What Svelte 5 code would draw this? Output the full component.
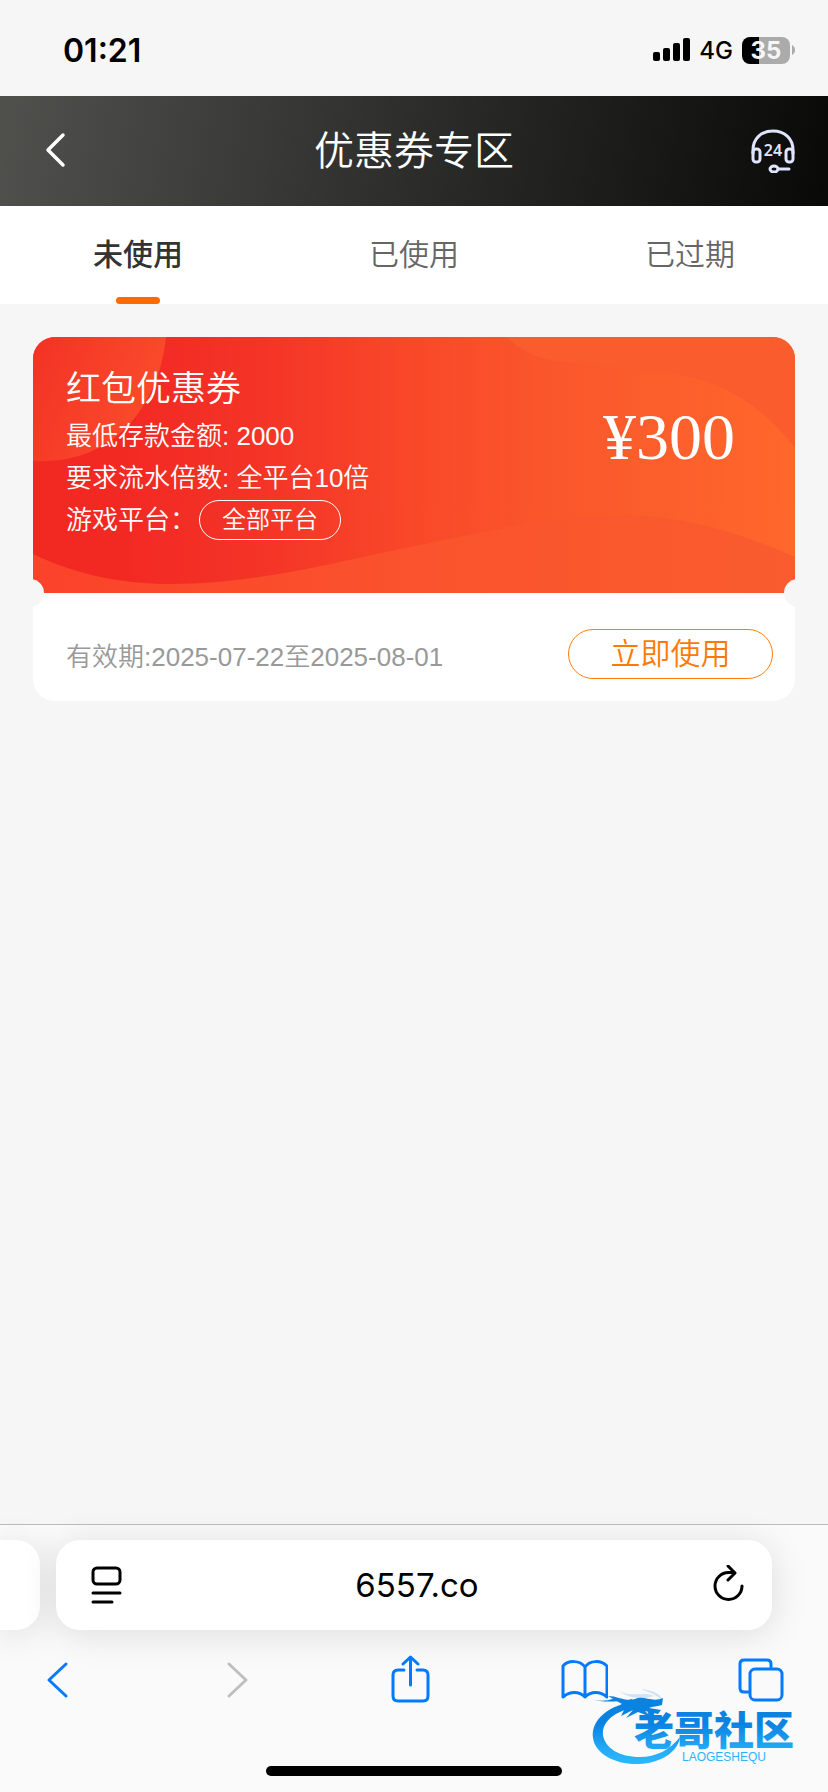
<script>
  const tabs = ["未使用", "已使用", "已过期"];
  let activeTab = $state(0);

  const coupons = [
    {
      title: "红包优惠券",
      minDeposit: "2000",
      turnover: "全平台10倍",
      platform: "全部平台",
      amount: 300,
      from: "2025-07-22",
      to: "2025-08-01",
      tab: 0
    }
  ];

  let visible = $derived(coupons.filter(c => c.tab === activeTab));
</script>

<div class="screen">
  <div class="status-bar">
    <span class="time">01:21</span>
    <div class="status-icons">
      <svg class="signal" viewBox="0 0 38 24" aria-hidden="true">
        <rect x="0" y="14" width="7" height="9" rx="2" />
        <rect x="10" y="10" width="7" height="13" rx="2" />
        <rect x="20" y="5" width="7" height="18" rx="2" />
        <rect x="30" y="0" width="7" height="23" rx="2" />
      </svg>
      <span class="network">4G</span>
      <div class="battery"><span>35</span></div>
      <svg class="battery-tip" viewBox="0 0 3 10" aria-hidden="true">
        <path d="M0 0C4 2 4 8 0 10Z" fill="#ababab" />
      </svg>
    </div>
  </div>

  <header class="nav">
    <button class="nav-button" aria-label="返回">
      <svg width="44" height="44" viewBox="0 0 44 44" fill="none">
        <path d="M30 6L15 21L30 36" stroke="#fff" stroke-width="3.500" stroke-linecap="round" stroke-linejoin="round" />
      </svg>
    </button>
    <h1>优惠券专区</h1>
    <button class="nav-button" aria-label="客服">
      <svg width="44" height="44" viewBox="0 0 44 44" fill="none" stroke="#dfe5ff" stroke-width="3">
        <path d="M2 25V21C2 10 10 2 22 2S42 10 42 21V25" />
        <rect x="2" y="20" width="7" height="13" rx="3" />
        <rect x="35" y="20" width="7" height="13" rx="3" />
        <ellipse cx="23" cy="40" rx="4" ry="3" />
        <path d="M28 40H38" stroke-linecap="round" />
        <text x="22" y="27" class="hours">24</text>
      </svg>
    </button>
  </header>

  <div class="tabs" role="tablist">
    {#each tabs as tab, i}
      <button
        class="tab"
        class:active={i === activeTab}
        role="tab"
        aria-selected={i === activeTab}
        onclick={() => (activeTab = i)}
      >{tab}</button>
    {/each}
  </div>

  <main>
    {#each visible as coupon}
      <article class="coupon">
        <div class="coupon-top">
          <svg class="art" viewBox="0 0 762 256" preserveAspectRatio="none" aria-hidden="true">
            <defs>
              <linearGradient id="base">
                <stop offset="0.1" stop-color="#f22823" />
                <stop offset="0.3" stop-color="#f43427" />
                <stop offset="0.5" stop-color="#f94829" />
                <stop offset="0.7" stop-color="#fa582c" />
                <stop offset="1" stop-color="#ff672b" />
              </linearGradient>
              <linearGradient id="corner" x1="0" y1="0" x2="1" y2="0.4">
                <stop offset="0" stop-color="#f33225" />
                <stop offset="1" stop-color="#fa4c2b" />
              </linearGradient>
              <linearGradient id="wave">
                <stop offset="0" stop-color="#fb422a" />
                <stop offset="0.5" stop-color="#fa532d" />
                <stop offset="1" stop-color="#fa5c2e" />
              </linearGradient>
            </defs>
            <rect width="762" height="256" fill="url(#base)" />
            <path d="M0 0H133C126 66 84 128 0 124Z" fill="url(#corner)" />
            <path d="M474 0C500 24 516 24 574 29C630 36 700 30 762 111V0Z" fill="#fa5c2e" />
            <path d="M0 217C50 241 96 247 140 247C220 247 300 226 387 208C450 195 520 178 587 178C640 178 700 192 762 220V256H0Z" fill="url(#wave)" />
          </svg>
          <div class="info">
            <h2>{coupon.title}</h2>
            <p>最低存款金额: {coupon.minDeposit}</p>
            <p>要求流水倍数: {coupon.turnover}</p>
            <p class="platform">游戏平台：<span class="chip">{coupon.platform}</span></p>
          </div>
          <div class="amount">¥{coupon.amount}</div>
        </div>
        <div class="coupon-bottom">
          <span class="validity">有效期:{coupon.from}至{coupon.to}</span>
          <button class="use">立即使用</button>
        </div>
      </article>
    {/each}
  </main>

  <footer class="browser">
    <div class="address-row">
      <div class="pill previous"></div>
      <div class="pill address">
        <button aria-label="页面菜单">
          <svg width="36" height="40" viewBox="0 0 36 40" fill="none" stroke="#000" stroke-width="3" stroke-linecap="round">
            <rect x="5" y="3" width="27" height="16" rx="4" />
            <path d="M5 28H32M5 37H24" />
          </svg>
        </button>
        <span class="url">6557.co</span>
        <button aria-label="重新加载">
          <svg width="36" height="40" viewBox="0 0 36 40" fill="none" stroke="#000" stroke-width="3" stroke-linecap="round" stroke-linejoin="round">
            <path d="M32 21A13.500 13.500 0 1 1 18.500 7.500H24" />
            <path d="M18 1L25 8L18 15" />
          </svg>
        </button>
      </div>
      <div class="pill next"></div>
    </div>

    <nav class="toolbar">
      <button aria-label="后退">
        <svg width="48" height="52" viewBox="0 0 48 52">
          <path d="M33 10L16 26L33 42" />
        </svg>
      </button>
      <button aria-label="前进" disabled>
        <svg width="48" height="52" viewBox="0 0 48 52">
          <path d="M20 10L37 26L20 42" />
        </svg>
      </button>
      <button aria-label="分享">
        <svg width="48" height="52" viewBox="0 0 48 52">
          <path d="M19 16H13Q8 16 8 21V42Q8 47 13 47H38Q43 47 43 42V21Q43 16 38 16H32" />
          <path d="M25.500 31V3M18 10L25.500 3L33 10" />
        </svg>
      </button>
      <button aria-label="书签">
        <svg width="48" height="52" viewBox="0 0 48 52">
          <path d="M25 13C20 6 8 6 3 12V43C10 37 19 37 25 43C31 37 40 37 47 43V12C41 6 30 6 25 13V43" />
        </svg>
      </button>
      <button aria-label="标签页">
        <svg width="48" height="52" viewBox="0 0 48 52">
          <rect x="14" y="15" width="32" height="31" rx="5" />
          <path d="M12 38H8Q4 38 4 34V10Q4 6 8 6H31Q35 6 35 10V13" />
        </svg>
      </button>
    </nav>

    <div class="home-indicator"></div>

    <svg class="watermark" width="228" height="80" viewBox="0 0 228 80" aria-label="老哥社区">
      <defs>
        <linearGradient id="ink" x1="0" y1="10" x2="0" y2="76" gradientUnits="userSpaceOnUse">
          <stop offset="0" stop-color="#0a82df" />
          <stop offset="0.4" stop-color="#0c83e2" />
          <stop offset="0.8" stop-color="#25acf8" />
          <stop offset="1" stop-color="#2bb8ff" />
        </linearGradient>
      </defs>
      <g fill="url(#ink)">
        <path d="M32 17C14 23 3 36 5 50C7 66 28 77 51 76C73 75 90 64 92 49C82 62 68 69 52 69C31 69 17 60 15 47C14 34 25 25 43 20L58 17L43 11Z" />
        <path d="M3 11C14 15 28 13 39 13L27 10C17 14 9 13 3 11Z" />
        <path d="M20 8C30 8 37 14 47 11C56 7 64 15 75 10L74 17C68 19 65 18 61 20L73 22L70 26L57 23L63 29L50 24L38 30L45 22L33 28L37 20L28 23L34 16Z" />
        <path d="M31 3C45 10 57 3 66 8C57 11 43 12 31 3ZM53 1C65 2 74 7 74 12C68 7 61 4 53 1Z" opacity="0.18" />
        <text x="46" y="57" class="brand">老哥社区</text>
        <text x="94" y="73" class="latin">LAOGESHEQU</text>
      </g>
    </svg>
  </footer>
</div>

<style>
  :global(body) {
    margin: 0;
    background: #f6f6f6;
  }

  .screen {
    display: flex;
    flex-direction: column;
    min-height: 100vh;
    overflow: hidden;
    background: #f6f6f6;
    font-family: "Liberation Sans", "Noto Sans CJK SC", sans-serif;
    font-weight: 350;
  }

  button {
    margin: 0;
    padding: 0;
    border: 0;
    background: none;
    font: inherit;
    color: inherit;
    cursor: pointer;
  }

  svg {
    display: block;
  }

  h1, h2, p {
    margin: 0;
    font-weight: inherit;
  }

  /* status bar */
  .status-bar {
    display: flex;
    align-items: center;
    justify-content: space-between;
    height: 96px;
    padding: 4px 33px 0 63px;
    box-sizing: border-box;
    font-family: Inter, "Liberation Sans", sans-serif;
  }

  .time {
    font-size: 32px;
    font-weight: 600;
  }

  .status-icons {
    display: flex;
    align-items: center;
  }

  .signal {
    width: 38px;
    height: 24px;
  }

  .network {
    margin: 0 9px 0 8px;
    font-size: 24px;
    font-weight: 500;
  }

  .battery {
    width: 48px;
    height: 27px;
    border-radius: 8px;
    background: linear-gradient(90deg, #000 35%, #ababab 35%);
    color: #f6f6f6;
    font-size: 24px;
    font-weight: 700;
    line-height: 27px;
    text-align: center;
  }

  .battery-tip {
    width: 3px;
    height: 10px;
    margin-left: 2px;
  }

  /* page header */
  .nav {
    display: flex;
    align-items: center;
    justify-content: space-between;
    height: 110px;
    padding: 0 33px;
    background: linear-gradient(100deg, #50504d, #2b2b29 52%, #090908);
    color: #fff;
  }

  .nav h1 {
    font-size: 40px;
    line-height: 56px;
  }

  .hours {
    fill: #dfe5ff;
    stroke: none;
    font-family: "Noto Sans", sans-serif;
    font-size: 16px;
    font-weight: 600;
    text-anchor: middle;
  }

  /* tabs */
  .tabs {
    display: grid;
    grid-template-columns: repeat(3, 1fr);
    height: 98px;
    background: #fff;
  }

  .tab {
    position: relative;
    padding-bottom: 6px;
    color: #666;
    font-size: 30px;
  }

  .tab.active {
    color: #333;
    font-weight: 500;
  }

  .tab.active::after {
    content: "";
    position: absolute;
    bottom: 0;
    left: 50%;
    width: 44px;
    height: 7px;
    margin-left: -22px;
    border-radius: 4px;
    background: #ff6a00;
  }

  /* coupon */
  main {
    flex: 1;
    padding: 33px;
  }

  .coupon {
    position: relative;
    border-radius: 22px;
    background: #fff;
    overflow: hidden;
  }

  .coupon::before,
  .coupon::after {
    content: "";
    position: absolute;
    z-index: 1;
    top: 242px;
    width: 28px;
    height: 28px;
    border-radius: 50%;
    background: #f6f6f6;
  }

  .coupon::before {
    left: -17px;
  }

  .coupon::after {
    right: -17px;
  }

  .coupon-top {
    position: relative;
    display: flex;
    justify-content: space-between;
    height: 256px;
    padding: 26px 60px 0 33px;
    box-sizing: border-box;
    color: #fff;
  }

  .art {
    position: absolute;
    inset: 0;
    width: 100%;
    height: 100%;
  }

  .info,
  .amount {
    position: relative;
  }

  .info h2 {
    font-size: 35px;
    line-height: 52px;
  }

  .info p {
    font-size: 26px;
    line-height: 42px;
  }

  .platform {
    display: flex;
    align-items: center;
  }

  .chip {
    margin-left: 3px;
    padding: 0 22px;
    border: 1px solid #fff;
    border-radius: 20px;
    font-size: 24px;
    line-height: 38px;
  }

  .amount {
    padding-top: 36px;
    font-family: "Liberation Serif", serif;
    font-size: 66px;
    line-height: 76px;
  }

  .coupon-bottom {
    display: flex;
    align-items: center;
    justify-content: space-between;
    height: 108px;
    padding: 14px 22px 0 33px;
    box-sizing: border-box;
  }

  .validity {
    color: #999;
    font-size: 26px;
  }

  .use {
    width: 205px;
    height: 50px;
    border: 1px solid #ff7d0d;
    border-radius: 25px;
    color: #ff7a05;
    font-size: 30px;
    line-height: 48px;
  }

  /* browser chrome */
  .browser {
    position: relative;
    border-top: 1px solid #bdbdbd;
    background: #fafafa;
  }

  .address-row {
    display: flex;
    gap: 16px;
    padding-top: 15px;
  }

  .pill {
    height: 90px;
    background: #fff;
    box-shadow: 0 4px 36px rgba(0, 0, 0, 0.12);
  }

  .previous {
    width: 40px;
    border-radius: 0 24px 24px 0;
  }

  .next {
    width: 40px;
    visibility: hidden;
  }

  .address {
    flex: 1;
    display: flex;
    align-items: center;
    justify-content: space-between;
    padding: 0 26px 0 32px;
    border-radius: 24px;
  }

  .url {
    font-family: Inter, "Liberation Sans", sans-serif;
    font-size: 33px;
    font-weight: 400;
  }

  .toolbar {
    position: relative;
    display: flex;
    justify-content: space-between;
    padding: 24px 44px 0 33px;
  }

  .toolbar svg {
    fill: none;
    stroke: #007aff;
    stroke-width: 3;
    stroke-linecap: round;
    stroke-linejoin: round;
  }

  .toolbar button:disabled svg {
    stroke: #bfbfbf;
  }

  .home-indicator {
    width: 296px;
    height: 10px;
    margin: 60px auto 16px;
    border-radius: 5px;
    background: #000;
  }

  .watermark {
    position: absolute;
    right: 12px;
    bottom: 24px;
  }

  .brand {
    font-family: "Noto Sans CJK SC", sans-serif;
    font-size: 40px;
    font-weight: 900;
  }

  .latin {
    font-family: "Liberation Sans", sans-serif;
    font-size: 12px;
    font-weight: 400;
  }
</style>
